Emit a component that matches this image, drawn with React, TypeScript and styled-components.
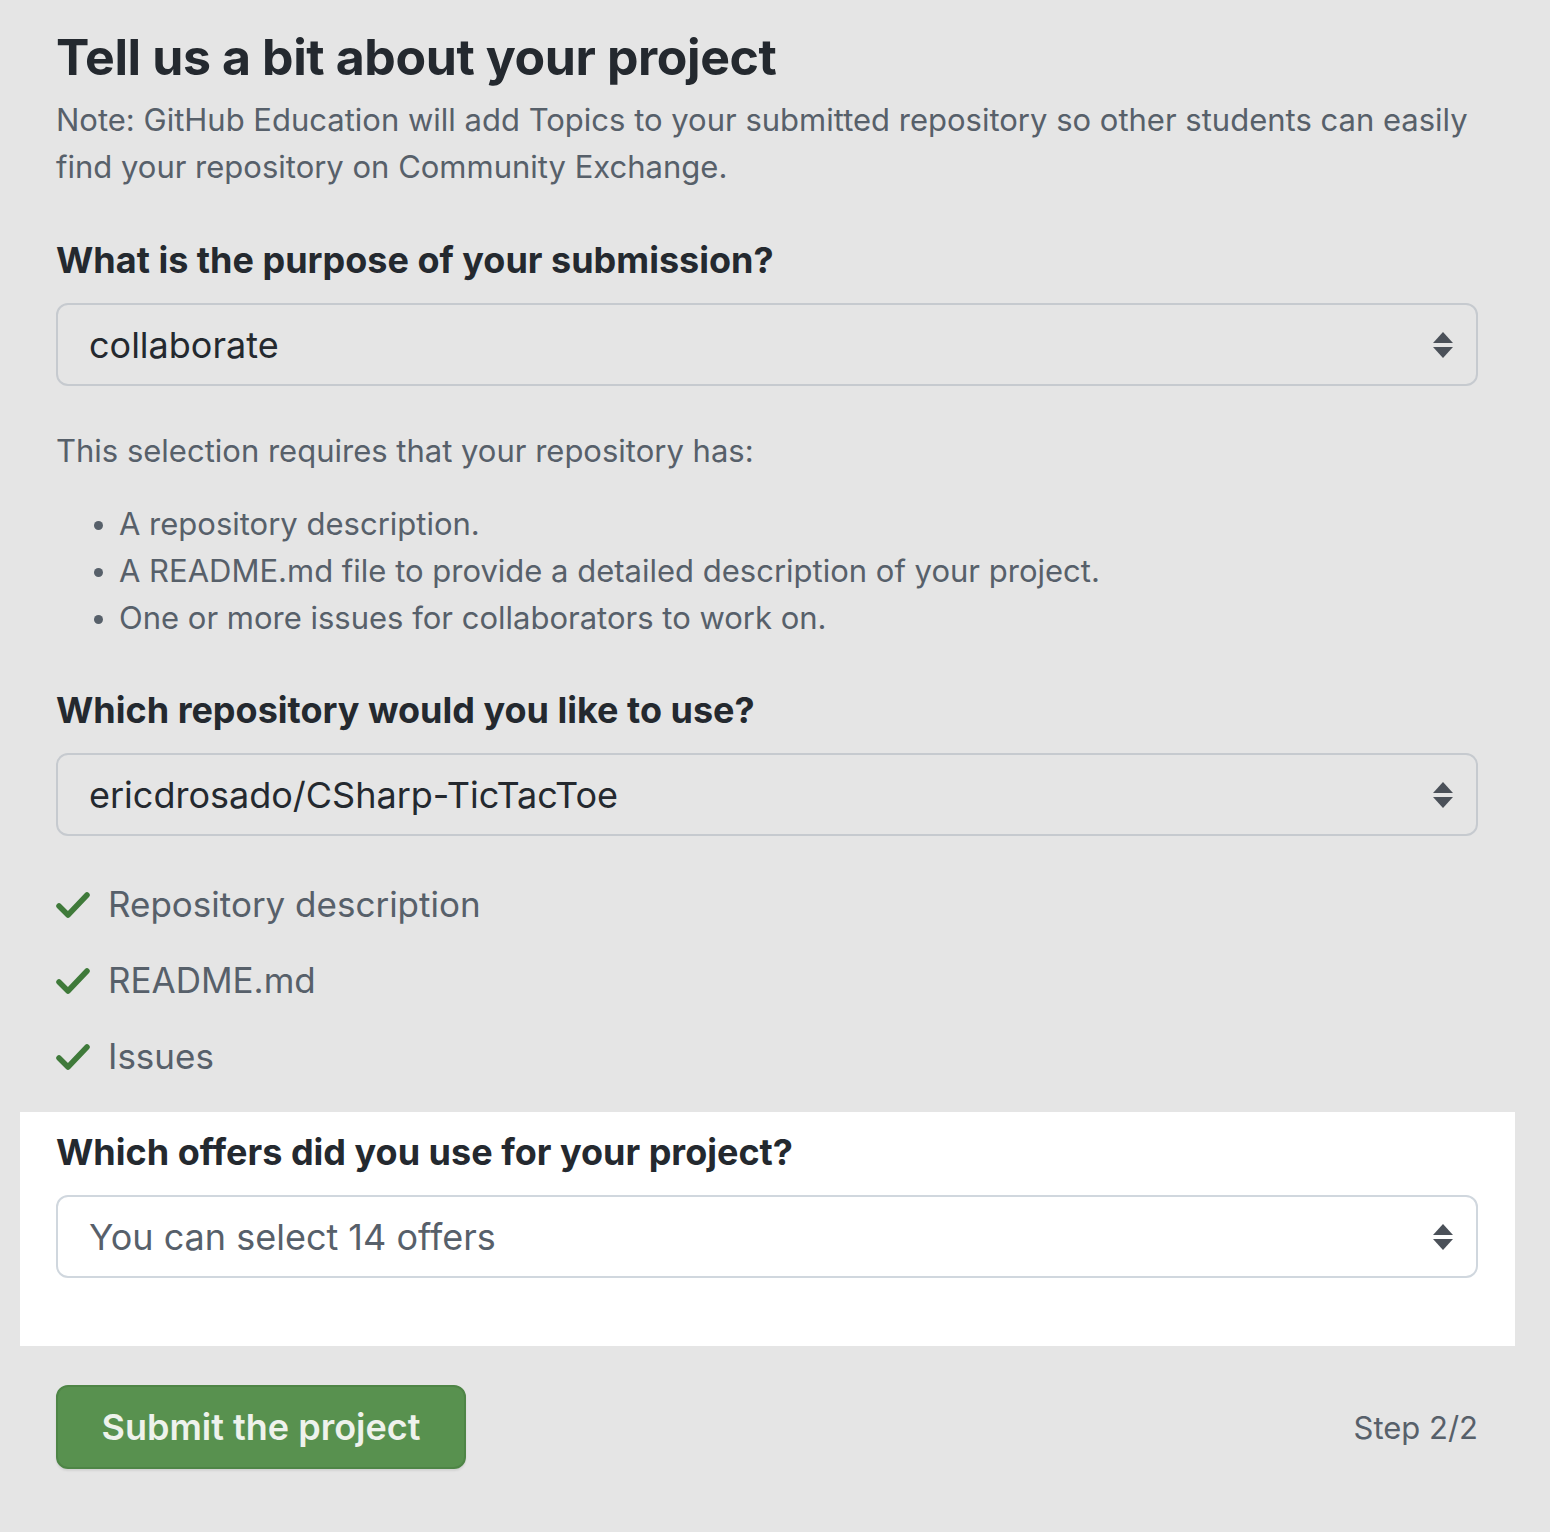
import React from 'react';
import styled, { createGlobalStyle } from 'styled-components';

const GlobalStyle = createGlobalStyle`
    body {
        margin: 0;
        background: #e5e5e5;
        font-family: Inter, "Liberation Sans", sans-serif;
        color: #24292f;
    }
`;

const Page = styled.div`
    width: 1550px;
    min-height: 1532px;
    box-sizing: border-box;
    padding: 22px 0 0;
`;

const Section = styled.div`
    padding: 0 72px 0 56px;
`;

const Title = styled.h1`
    margin: 0 0 4px;
    font-size: 50px;
    line-height: 70px;
    font-weight: 700;
    letter-spacing: -0.4px;
`;

const Note = styled.p<{ $gap?: number }>`
    margin: ${p => p.$gap ?? 0}px 0 0;
    font-size: 31px;
    line-height: 47px;
    color: #57606a;
`;

const Heading = styled.h2<{ $gap?: number }>`
    margin: ${p => p.$gap ?? 0}px 0 19px;
    font-size: 36px;
    line-height: 48px;
    font-weight: 700;
`;

const Select = styled.div<{ $white?: boolean }>`
    display: flex;
    align-items: center;
    justify-content: space-between;
    height: 83px;
    box-sizing: border-box;
    padding: 0 22px 0 31px;
    border: 2px solid ${p => (p.$white ? '#d0d7de' : '#c6cacf')};
    border-radius: 12px;
    background: ${p => (p.$white ? '#ffffff' : '#e5e5e5')};
    font-size: 36px;
`;

const SelectText = styled.span<{ $placeholder?: boolean }>`
    color: ${p => (p.$placeholder ? '#57606a' : '#24292f')};
`;

const Bullets = styled.ul`
    margin: 26px 0 0;
    padding: 0 0 0 63px;
    font-size: 31px;
    line-height: 47px;
    color: #57606a;
    li::marker {
        font-size: 28px;
    }
`;

const Checks = styled.div`
    display: flex;
    flex-direction: column;
    gap: 29px;
    margin: 45px 0 32px;
`;

const CheckRow = styled.div`
    display: flex;
    align-items: center;
    gap: 18px;
    font-size: 35px;
    line-height: 47px;
    color: #57606a;
`;

const Panel = styled.div`
    margin: 0 35px 0 20px;
    padding: 16px 37px 68px 36px;
    background: #ffffff;
`;

const Footer = styled.div`
    display: flex;
    align-items: center;
    justify-content: space-between;
    padding: 39px 72px 0 56px;
`;

const Button = styled.button`
    width: 410px;
    height: 84px;
    border: 2px solid #4e8546;
    border-radius: 12px;
    background: #58914f;
    color: #eef2ec;
    font-family: Inter, "Liberation Sans", sans-serif;
    font-size: 36px;
    font-weight: 600;
    box-shadow: 0 2px 2px rgba(0, 0, 0, 0.08);
    cursor: pointer;
`;

const Step = styled.span`
    font-size: 31px;
    color: #57606a;
`;

const Arrows = () => (
    <svg width="22" height="30" viewBox="0 0 22 30">
        <path d="M11 2 L21 13 H1 Z" fill="#4b5159" />
        <path d="M1 17 H21 L11 28 Z" fill="#4b5159" />
    </svg>
);

const Check = () => (
    <svg width="34" height="30" viewBox="0 0 34 30">
        <path d="M3 16 L12 25 L31 5" fill="none" stroke="#3f7a3a" strokeWidth="5.5" strokeLinecap="round" strokeLinejoin="round" />
    </svg>
);

const requirements = [
    'A repository description.',
    'A README.md file to provide a detailed description of your project.',
    'One or more issues for collaborators to work on.',
];

const checks = ['Repository description', 'README.md', 'Issues'];

const App = () => {
    return (
        <Page>
            <GlobalStyle />
            <Section>
                <Title>Tell us a bit about your project</Title>
                <Note>
                    Note: GitHub Education will add Topics to your submitted repository so other students can easily
                    find your repository on Community Exchange.
                </Note>

                <Heading $gap={46}>What is the purpose of your submission?</Heading>
                <Select>
                    <SelectText>collaborate</SelectText>
                    <Arrows />
                </Select>

                <Note $gap={41}>This selection requires that your repository has:</Note>
                <Bullets>
                    {requirements.map(r => (
                        <li key={r}>{r}</li>
                    ))}
                </Bullets>

                <Heading $gap={45}>Which repository would you like to use?</Heading>
                <Select>
                    <SelectText>ericdrosado/CSharp-TicTacToe</SelectText>
                    <Arrows />
                </Select>

                <Checks>
                    {checks.map(c => (
                        <CheckRow key={c}>
                            <Check />
                            {c}
                        </CheckRow>
                    ))}
                </Checks>
            </Section>

            <Panel>
                <Heading>Which offers did you use for your project?</Heading>
                <Select $white>
                    <SelectText $placeholder>You can select 14 offers</SelectText>
                    <Arrows />
                </Select>
            </Panel>

            <Footer>
                <Button>Submit the project</Button>
                <Step>Step 2/2</Step>
            </Footer>
        </Page>
    );
};

export default App;
